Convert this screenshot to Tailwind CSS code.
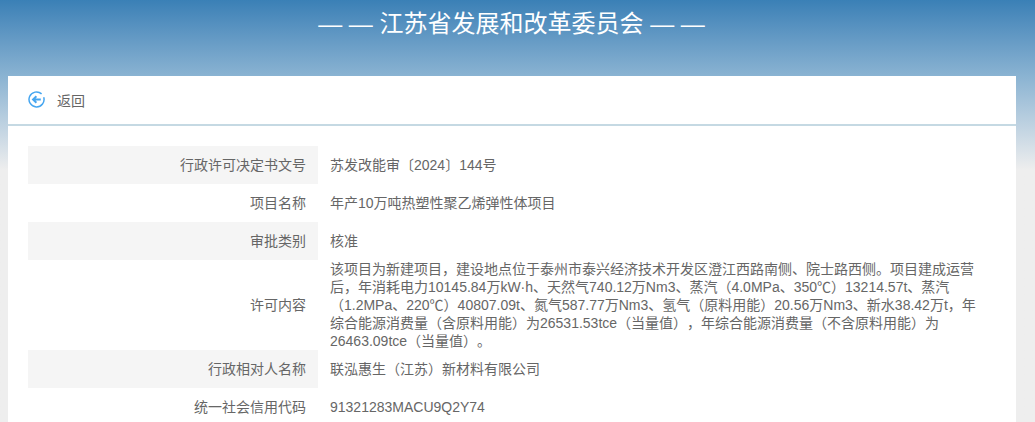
<!DOCTYPE html>
<html lang="zh-CN">
<head>
  <meta charset="UTF-8">
  <meta name="viewport" content="width=device-width, initial-scale=1.0">
  <title>江苏省发展和改革委员会</title>
  <script src="https://cdn.jsdelivr.net/npm/@tailwindcss/browser@4"></script>
</head>
<body class="h-[422px] overflow-hidden bg-[#eeeeee] bg-gradient-to-b from-[#3a80b6] from-0% via-[#8ab3d2] via-[76px] to-[#eeeeee] to-[170px] font-['Liberation_Sans','Noto_Sans_CJK_SC',sans-serif] text-[14px] text-[#666666] [text-spacing-trim:space-all]">
  <!-- Title -->
  <div class="h-[76px] pt-[6px] pr-[12px] text-center text-[24px] leading-[36px] text-white">— — 江苏省发展和改革委员会 — —</div>

  <!-- Card -->
  <div class="ml-2 w-[1008px] bg-white">
    <div class="flex h-[50px] items-center border-b-2 border-[#c5d9e3] pl-5">
      <svg class="h-[17px] w-[17px] mb-[1px]" viewBox="0 0 17 17" fill="none" stroke="#46a6f0" stroke-width="1.5">
        <path d="M13.6 2.9A7.5 7.5 0 1 0 15.7 6.2" />
        <path d="M12.8 8.5H5.2M8.4 5.2L5 8.5l3.4 3.3" stroke-width="1.9" />
      </svg>
      <span class="ml-[12px] mt-[2px]">返回</span>
    </div>

    <div class="px-5 pt-5">
      <div class="flex h-[38px] items-center">
        <div class="flex h-full w-[290px] items-center justify-end bg-[#f5f5f5] pr-3">行政许可决定书文号</div>
        <div class="ml-3">苏发改能审〔2024〕144号</div>
      </div>
      <div class="flex h-[38px] items-center">
        <div class="w-[290px] pr-3 text-right">项目名称</div>
        <div class="ml-3">年产10万吨热塑性聚乙烯弹性体项目</div>
      </div>
      <div class="flex h-[38px] items-center">
        <div class="flex h-full w-[290px] items-center justify-end bg-[#f5f5f5] pr-3">审批类别</div>
        <div class="ml-3">核准</div>
      </div>
      <div class="flex h-[90px] items-center">
        <div class="w-[290px] pr-3 text-right">许可内容</div>
        <div class="ml-3 w-[656px] leading-[18px]">该项目为新建项目，建设地点位于泰州市泰兴经济技术开发区澄江西路南侧、院士路西侧。项目建成运营后，年消耗电力10145.84万kW·h、天然气740.12万Nm3、蒸汽（4.0MPa、350℃）13214.57t、蒸汽（1.2MPa、220℃）40807.09t、氮气587.77万Nm3、氢气（原料用能）20.56万Nm3、新水38.42万t，年综合能源消费量（含原料用能）为26531.53tce（当量值），年综合能源消费量（不含原料用能）为26463.09tce（当量值）。</div>
      </div>
      <div class="flex h-[38px] items-center">
        <div class="flex h-full w-[290px] items-center justify-end bg-[#f5f5f5] pr-3">行政相对人名称</div>
        <div class="ml-3">联泓惠生（江苏）新材料有限公司</div>
      </div>
      <div class="flex h-[38px] items-center">
        <div class="w-[290px] pr-3 text-right">统一社会信用代码</div>
        <div class="ml-3">91321283MACU9Q2Y74</div>
      </div>
    </div>
  </div>
</body>
</html>
